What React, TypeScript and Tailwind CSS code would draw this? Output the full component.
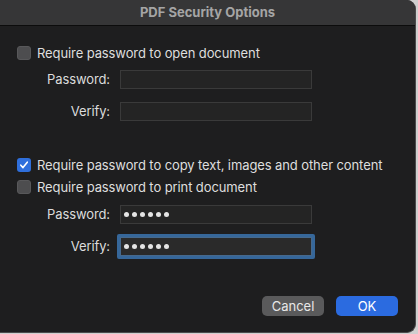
import React from "react";

const font = { fontFamily: "Inter, 'Noto Sans', sans-serif" };

function Checkbox({ checked }: { checked?: boolean }) {
  if (checked) {
    return (
      <div className="w-[14px] h-[14px] rounded-[3px] bg-[#2f6fdc] flex items-center justify-center shrink-0">
        <svg width="10" height="10" viewBox="0 0 10 10">
          <path d="M1.8 5.2 L4 7.6 L8.3 2.2" fill="none" stroke="#ffffff" strokeWidth="1.6" strokeLinecap="round" strokeLinejoin="round" />
        </svg>
      </div>
    );
  }
  return <div className="w-[14px] h-[14px] rounded-[3px] bg-[#4d4d4f] border border-[#58585a] shrink-0" />;
}

function Dots() {
  return (
    <div className="flex items-center gap-[3px] pl-[3px]">
      {[0, 1, 2, 3, 4, 5].map((i) => (
        <span key={i} className="w-[5px] h-[5px] rounded-full bg-[#e4e4e4]" />
      ))}
    </div>
  );
}

function Field({ label, filled, focused }: { label: string; filled?: boolean; focused?: boolean }) {
  return (
    <div className="flex items-center">
      <div className="w-[111px] text-right text-[13px] tracking-[-0.1px] text-[#dcdcdc] pr-[1px]">{label}</div>
      <div className="ml-[9px] relative">
        {focused && (
          <div className="absolute -inset-[3px] rounded-[2px] border-[3px] border-[#36679a]" />
        )}
        <div
          className={
            "w-[192px] h-[19px] border flex items-center " +
            (focused ? "bg-[#2a2a2a] border-[#46698d]" : "bg-[#242424] border-[#3a3a3a]")
          }
        >
          {filled && <Dots />}
        </div>
      </div>
    </div>
  );
}

function CheckRow({ checked, text }: { checked?: boolean; text: string }) {
  return (
    <div className="flex items-center h-[14px] pl-[17px] gap-[6px]">
      <Checkbox checked={checked} />
      <span className="text-[13px] tracking-[-0.1px] text-[#dedede] leading-none">{text}</span>
    </div>
  );
}

export default function App() {
  return (
    <div className="w-[418px] h-[334px] bg-[#cfcfcf]" style={font}>
      <div className="w-[416px] h-[333px] bg-[#1e1e1f] rounded-r-[9px] border-r border-b border-[#4b4b4c] overflow-hidden flex flex-col">
        <div className="h-[26px] bg-[#363637] border-b border-[#0c0c0c] flex items-center justify-center shrink-0">
          <span className="text-[13px] font-bold text-[#a5a5a5]">PDF Security Options</span>
        </div>
        <div className="flex flex-col">
          <div className="mt-[20px]">
            <CheckRow text="Require password to open document" />
          </div>
          <div className="mt-[10px]">
            <Field label="Password:" />
          </div>
          <div className="mt-[12px]">
            <Field label="Verify:" />
          </div>
          <div className="mt-[37px]">
            <CheckRow checked text="Require password to copy text, images and other content" />
          </div>
          <div className="mt-[8px]">
            <CheckRow text="Require password to print document" />
          </div>
          <div className="mt-[11px]">
            <Field label="Password:" filled />
          </div>
          <div className="mt-[12px]">
            <Field label="Verify:" filled focused />
          </div>
          <div className="mt-[40px] flex justify-end gap-[12px] pr-[17px]">
            <button className="w-[62px] h-[20px] rounded-[5px] bg-[#5a5a5b] text-[13px] text-[#e8e8e8] leading-none">
              Cancel
            </button>
            <button className="w-[62px] h-[20px] rounded-[5px] bg-[#2b6be0] text-[13px] text-white leading-none">
              OK
            </button>
          </div>
        </div>
      </div>
    </div>
  );
}
